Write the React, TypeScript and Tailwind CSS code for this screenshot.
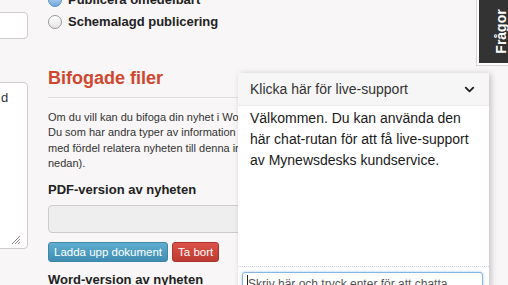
import { ChevronDown } from 'lucide-react';

function Radio({ checked }: { checked?: boolean }) {
    return (
        <span
            className={
                checked
                    ? 'block h-[14px] w-[14px] shrink-0 rounded-full border border-[#5b8fc7] bg-gradient-to-b from-[#cfe3f7] to-[#6ea6dd]'
                    : 'block h-[14px] w-[14px] shrink-0 rounded-full border border-[#9a9a9a] bg-gradient-to-b from-white to-[#e4e4e4]'
            }
        />
    );
}

function ChatBox() {
    return (
        <div className="absolute left-[238px] top-[73px] w-[251px] bg-white shadow-[2px_1px_6px_rgba(0,0,0,0.22)]">
            <div className="flex h-[33px] items-center justify-between border-b border-[#ececec] bg-[#f6f6f6] pl-[12px] pr-[12px] text-[14px] text-[#333]">
                <span>Klicka här för live-support</span>
                <ChevronDown size={15} strokeWidth={3} className="text-[#222]" />
            </div>
            <div className="h-[160px] px-[12px] pt-[2px] text-[14px] leading-[21px] text-[#1a1a1a]">
                Välkommen. Du kan använda den här chat-rutan för att få live-support av Mynewsdesks kundservice.
            </div>
            <div className="border-t border-dotted border-[#cfd8e0] px-[4px] pr-[6px] pt-[5px]">
                <div className="flex h-[34px] items-start rounded-[3px] border border-[#86b4e3] bg-white pl-[4px] pt-[2px] text-[12px] text-[#555] shadow-[0_0_3px_rgba(90,150,220,0.5)]">
                    <span className="h-[14px] w-px bg-[#222]" />
                    <span>Skriv här och tryck enter för att chatta</span>
                </div>
            </div>
        </div>
    );
}

function QuestionsTab() {
    return (
        <div className="absolute right-0 top-0 flex h-[65px] w-[31px] border-b-2 border-l-2 border-white shadow-[0_0_0_1px_#d9d6d6]">
            <div className="flex flex-1 items-center justify-center bg-[#333]">
                <span className="-rotate-90 whitespace-nowrap text-[14px] font-bold text-white">Frågor</span>
            </div>
        </div>
    );
}

export default function App() {
    return (
        <div className="relative h-[285px] w-[508px] overflow-hidden bg-[#f8f6f6] font-['Liberation_Sans',Arial,sans-serif]">
            <div className="flex gap-[20px]">
                {/* left column, mostly cut off */}
                <div className="w-[28px] shrink-0">
                    <div className="ml-[-20px] mt-[12px] h-[27px] w-[48px] rounded-[4px] border border-[#cfcccc] bg-white" />
                    <div className="relative ml-[-20px] mt-[43px] h-[167px] w-[48px] rounded-[4px] border border-[#cfcccc] bg-white pl-[20px] pt-[5px] text-[13px] text-[#333]">
                        d
                        <svg className="absolute bottom-[3px] right-[6px]" width="10" height="10" viewBox="0 0 10 10">
                            <path d="M1 9 L9 1 M4 9 L9 4 M7 9 L9 7" stroke="#888" strokeWidth="1" fill="none" />
                        </svg>
                    </div>
                </div>

                {/* main form column */}
                <div className="mt-[-11px] w-[300px] shrink-0 text-[#222]">
                    <div className="flex h-[22px] items-center gap-[6px] text-[13px] font-bold">
                        <Radio checked />
                        <span>Publicera omedelbart</span>
                    </div>
                    <div className="flex h-[22px] items-center gap-[6px] text-[13px] font-bold">
                        <Radio />
                        <span>Schemalagd publicering</span>
                    </div>

                    <h2 className="mt-[33px] w-[192px] border-b border-[#e2dfdf] pb-[7px] text-[18px] font-bold leading-[24px] text-[#d0472f]">
                        Bifogade filer
                    </h2>

                    {/* the chat box covers the rest of these lines */}
                    <p className="mt-[12px] w-[190px] overflow-hidden whitespace-nowrap text-[11px] leading-[15.3px] text-[#333]">
                        Om du vill kan du bifoga din nyhet i Word- och PDF-format.
                        <br />
                        Du som har andra typer av information kan
                        <br />
                        med fördel relatera nyheten till denna information (se
                        <br />
                        nedan).
                    </p>

                    <div className="mt-[10px] text-[13px] font-bold leading-[18px]">PDF-version av nyheten</div>
                    <div className="mt-[6px] h-[28px] rounded-[4px] border border-[#cfcccc] bg-[#eeeeee]" />

                    <div className="mt-[9px] flex gap-[4px]">
                        <button className="h-[20px] rounded-[3px] border border-[#3f87a8] bg-gradient-to-b from-[#5eaed0] to-[#3f8db2] px-[5px] text-[11.5px] text-white">
                            Ladda upp dokument
                        </button>
                        <button className="h-[20px] rounded-[3px] border border-[#a8352e] bg-gradient-to-b from-[#dc5249] to-[#bd3b33] px-[5px] text-[11.5px] text-white">
                            Ta bort
                        </button>
                    </div>

                    <div className="mt-[9px] text-[13px] font-bold leading-[18px]">Word-version av nyheten</div>
                </div>
            </div>

            <ChatBox />
            <QuestionsTab />
        </div>
    );
}
